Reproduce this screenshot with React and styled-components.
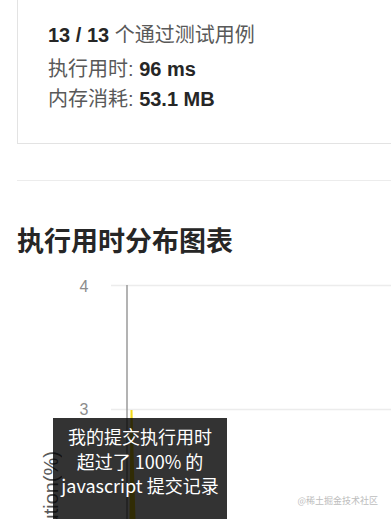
import React from 'react'
import styled, { createGlobalStyle } from 'styled-components';

const GlobalStyle = createGlobalStyle`
  html, body {
    margin: 0;
    padding: 0;
    background: #fff;
    overflow: hidden;
  }
  body {
    font-family: 'Liberation Sans', 'Noto Sans CJK SC', sans-serif;
  }
`;

const Page = styled.div`
  width: 391px;
  height: 519px;
  position: relative;
  overflow: hidden;
`;

const ResultCard = styled.div`
  margin-left: 17px;
  border-left: 1px solid #e3e3e3;
  border-bottom: 1px solid #e3e3e3;
  padding: 21px 0 0 30px;
  box-sizing: border-box;
  height: 144px;
`;

const Line = styled.div`
  font-size: 20px;
  line-height: 28px;
  color: #595959;
  margin-top: ${p => p.$gap || 0}px;
  white-space: nowrap;
  font-family: 'Liberation Sans', 'Noto Sans CJK SC', sans-serif;
`;

const Strong = styled.b`
  color: #262626;
  font-weight: 700;
`;

const Divider = styled.div`
  margin: 36px 0 0 17px;
  height: 1px;
  background: #ececec;
`;

const Heading = styled.h2`
  margin: 43px 0 0 17px;
  font-size: 27px;
  line-height: 32px;
  font-weight: 700;
  color: #262626;
  font-family: 'Noto Sans CJK SC', sans-serif;
  white-space: nowrap;
`;

const ChartWrap = styled.div`
  position: relative;
  margin-top: 14px;
  height: 249px;
`;

const ChartSvg = styled.svg`
  display: block;
`;

const AxisLabel = styled.div`
  position: absolute;
  left: 40px;
  top: 181px;
  writing-mode: vertical-rl;
  transform: rotate(180deg);
  font-size: 20px;
  line-height: 22px;
  color: #595959;
  white-space: nowrap;
  font-family: 'Liberation Sans', sans-serif;
`;

const Tooltip = styled.div`
  position: absolute;
  left: 53px;
  top: 148px;
  width: 174px;
  height: 110px;
  padding-top: 6px;
  box-sizing: border-box;
  background: rgba(0, 0, 0, 0.8);
  color: #fff;
  font-size: 18px;
  line-height: 24.5px;
  text-align: center;
  white-space: nowrap;
  font-family: 'Noto Sans CJK SC', sans-serif;
`;

const Watermark = styled.div`
  position: absolute;
  right: 13px;
  bottom: 12px;
  font-size: 9px;
  color: #bdbdbd;
  font-family: 'Noto Sans CJK SC', sans-serif;
`;

const App = () => (
  <Page>
    <GlobalStyle />
    <ResultCard>
      <Line><Strong>13 / 13</Strong> 个通过测试用例</Line>
      <Line $gap={6}>执行用时: <Strong>96 ms</Strong></Line>
      <Line $gap={2}>内存消耗: <Strong>53.1 MB</Strong></Line>
    </ResultCard>
    <Divider />
    <Heading>执行用时分布图表</Heading>
    <ChartWrap>
      <ChartSvg width="391" height="249">
        <line x1="111" y1="15.5" x2="391" y2="15.5" stroke="#ececec" strokeWidth="1.5" />
        <line x1="111" y1="139.5" x2="391" y2="139.5" stroke="#ececec" strokeWidth="1.5" />
        <text x="84" y="22" fontSize="16" fill="#8c8c8c" textAnchor="middle" fontFamily="Liberation Sans, sans-serif">4</text>
        <text x="84" y="145" fontSize="16" fill="#8c8c8c" textAnchor="middle" fontFamily="Liberation Sans, sans-serif">3</text>
        <polygon points="130.5,140 132.5,140 134,200 135.5,249 129.5,249 130,200" fill="#f2d91a" />
        <line x1="127" y1="15" x2="127" y2="249" stroke="#9a9a9a" strokeWidth="1.5" />
      </ChartSvg>
      <AxisLabel>distribution(%)</AxisLabel>
      <Tooltip>
        我的提交执行用时<br />
        超过了 100% 的<br />
        javascript 提交记录
      </Tooltip>
    </ChartWrap>
    <Watermark>@稀土掘金技术社区</Watermark>
  </Page>
)

export default App;
